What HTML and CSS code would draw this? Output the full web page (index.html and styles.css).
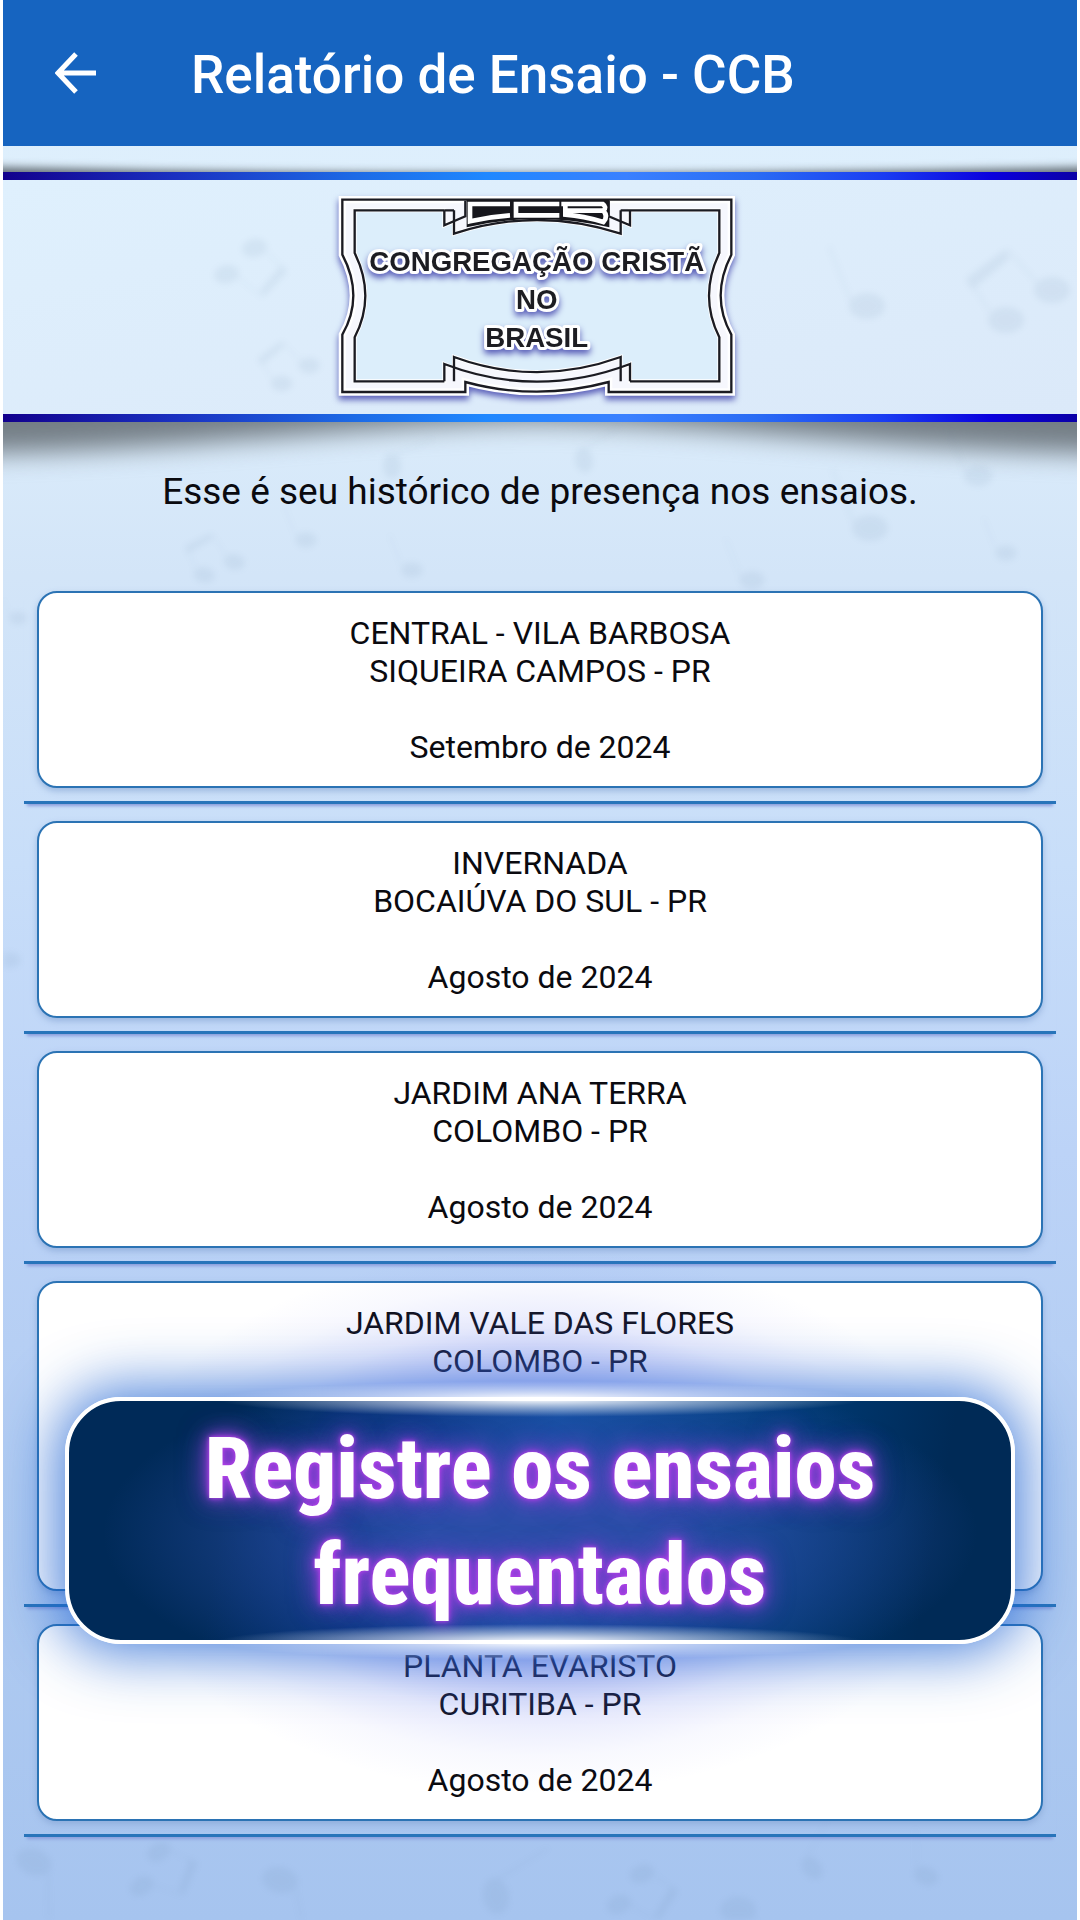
FILE: index.html
```html
<!DOCTYPE html>
<html lang="pt-BR">
<head>
<meta charset="utf-8">
<meta name="viewport" content="width=device-width, initial-scale=1">
<title>Relatório de Ensaio - CCB</title>
<link rel="stylesheet" href="styles.css">
</head>
<body>
<div class="screen">
  <svg class="notes" viewBox="0 0 1080 1920" preserveAspectRatio="xMidYMid slice" aria-hidden="true">
    <defs>
      <g id="single"><ellipse rx="18" ry="13"/><path d="M-16 -4L-38 -60" class="stem"/></g>
      <g id="pair"><ellipse cx="-24" cy="16" rx="18" ry="13"/><ellipse cx="22" cy="-14" rx="18" ry="13"/><path d="M-40 8L-62 -26L-22 -54L8 -20" class="stem"/><path d="M-64 -24L-26 -54L-20 -46L-58 -14Z"/></g>
    </defs>
    <use href="#single" x="867" y="306"/>
    <use href="#pair" x="1030" y="304"/>
    <use href="#pair" transform="translate(240 262) rotate(170) scale(.7)"/>
    <use href="#pair" transform="translate(296 374) scale(.6)"/>
    <use href="#single" x="870" y="528"/>
    <use href="#single" transform="translate(306 540) scale(.6)"/>
    <use href="#pair" transform="translate(220 568) rotate(10) scale(.6)"/>
    <use href="#single" transform="translate(978 476) scale(.8)"/>
    <use href="#single" transform="translate(1006 553) scale(.6)"/>
    <use href="#single" transform="translate(412 570) scale(.6)"/>
    <use href="#single" transform="translate(752 580) scale(.7)"/>
    <use href="#single" transform="translate(392 466) rotate(90) scale(.7)"/>
    <use href="#single" transform="translate(584 460) rotate(80) scale(.7)"/>
    <use href="#single" transform="translate(18 618) scale(.5)"/>
    <use href="#single" transform="translate(10 960) scale(.6)"/>
    <use href="#single" transform="translate(34 1862) rotate(200)"/>
    <use href="#pair" transform="translate(150 1870) rotate(150) scale(.7)"/>
    <use href="#single" transform="translate(280 1880) rotate(190)"/>
    <use href="#single" transform="translate(496 1896) rotate(80)"/>
    <use href="#pair" transform="translate(630 1890) rotate(160) scale(.7)"/>
    <use href="#single" transform="translate(738 1910) rotate(180)"/>
    <use href="#single" transform="translate(812 1868) rotate(50) scale(.7)"/>
    <use href="#single" transform="translate(926 1876) rotate(20) scale(.7)"/>
  </svg>

  <header class="bar">
    <button class="back" type="button" aria-label="Voltar">
      <svg viewBox="0 0 42 42" aria-hidden="true"><path d="M41 21H4M21 2L3 21L21 40"/></svg>
    </button>
    <h1 class="title">Relatório de Ensaio - CCB</h1>
  </header>

  <section class="brand">
    <svg class="shade" viewBox="0 0 1080 320" preserveAspectRatio="none" aria-hidden="true">
      <path class="shade-top" d="M-40 60V20Q540 34 1120 20V60Z"/>
      <path class="shade-bottom" d="M-40 230H1120V308C880 304 720 278 540 276C360 278 200 304 -40 308Z"/>
    </svg>
    <div class="band">
      <svg class="logo" viewBox="15 -4 1290 702" role="img" aria-label="Congregação Cristã no Brasil">
        <g class="frame">
          <path d="M67 55H1234V220Q1170 345 1234 460V632H866V602Q650 660 436 602V632H67V460Q133 345 67 220Z"/>
          <path class="hole" d="M104 87H373V132L402 120V157Q650 75 902 157V120L930 132V87H1198V215Q1136 345 1198 468V600H930V548L902 560V527Q650 618 402 527V560L373 548V600H104V468Q168 345 104 215Z"/>
        </g>
        <g class="rules">
          <path d="M67 55H1234V220Q1170 345 1234 460V632H866V602Q650 660 436 602V632H67V460Q133 345 67 220Z"/>
          <path d="M373 87H104V215Q168 345 104 468V600H373M930 87H1198V215Q1136 345 1198 468V600H930"/>
        </g>
        <g class="ribbon">
          <path d="M402 87V157Q650 75 902 157V87"/>
          <path d="M373 87V132L436 105V58M930 87V132L866 105V58M373 87H402M902 87H930"/>
          <path d="M402 600V527Q650 618 902 527V600"/>
          <path d="M373 600V548Q650 654 930 548V600"/>
        </g>
        <path class="plate" d="M440 56H868V138Q650 88 440 138Z"/>
        <g class="initials">
          <path d="M570 68H450V120Q510 106 570 102"/>
          <path d="M718 68H588V102H718"/>
          <path d="M724 68H848Q862 78 850 88H742H850Q866 106 850 122Q790 104 736 100V68"/>
        </g>
        <g class="name">
          <text x="650" y="269">CONGREGAÇÃO CRISTÃ</text>
          <text x="650" y="383">NO</text>
          <text x="650" y="497">BRASIL</text>
        </g>
      </svg>
    </div>
  </section>

  <main class="history">
    <p class="intro">Esse é seu histórico de presença nos ensaios.</p>
    <ul class="list">
      <li class="item"><article class="card"><p>CENTRAL - VILA BARBOSA<br>SIQUEIRA CAMPOS - PR</p><p>Setembro de 2024</p></article></li>
      <li class="item"><article class="card"><p>INVERNADA<br>BOCAIÚVA DO SUL - PR</p><p>Agosto de 2024</p></article></li>
      <li class="item"><article class="card"><p>JARDIM ANA TERRA<br>COLOMBO - PR</p><p>Agosto de 2024</p></article></li>
      <li class="item"><article class="card card-tall"><p>JARDIM VALE DAS FLORES<br>COLOMBO - PR</p></article></li>
      <li class="item"><article class="card"><p>PLANTA EVARISTO<br>CURITIBA - PR</p><p>Agosto de 2024</p></article></li>
    </ul>
  </main>

  <aside class="banner">
    <div class="plaque">
      <p class="slogan">Registre os ensaios<br>frequentados</p>
    </div>
  </aside>
</div>
</body>
</html>
```
FILE: styles.css
```css
* { box-sizing: border-box; margin: 0; padding: 0; }

body {
  background: #fff;
  color: #0a0a0f;
  font-family: Roboto, "Liberation Sans", sans-serif;
}

.screen {
  position: relative;
  isolation: isolate;
  display: flex;
  flex-direction: column;
  min-height: 100vh;
  margin: 0 3px;
  overflow: hidden;
  background: linear-gradient(#dff0fd 0%, #dcedfb 20%, #d3e5f8 30%, #c8def9 45%, #bcd3f7 60%, #b0cbf1 80%, #a6c4ef 100%);
}

.notes {
  position: absolute;
  inset: 0;
  z-index: 1;
  width: 100%;
  height: 100%;
  fill: #5f7fa0;
  opacity: .09;
  filter: blur(3px);
}
.stem { fill: none; stroke: #5f7fa0; stroke-width: 4; stroke-opacity: .5; }

.bar {
  display: flex;
  align-items: center;
  gap: 94px;
  height: 146px;
  padding: 0 52px;
  background: #1664c0;
  color: #fff;
}
.back { display: flex; border: 0; background: none; }
.back svg { width: 42px; height: 42px; fill: none; stroke: #fff; stroke-width: 5; }
.title { padding-top: 4px; font-size: 53px; font-weight: 500; line-height: 64px; }

.brand { position: relative; padding-top: 26px; }
.shade {
  position: absolute;
  inset: 0 0 auto;
  width: 100%;
  height: 320px;
  overflow: visible;
}
.shade-top { fill: #667078; filter: blur(4px); }
.shade-bottom { fill: #747e86; filter: blur(13px); }
.band {
  position: relative;
  display: flex;
  justify-content: center;
  border-style: solid;
  border-width: 8px 0;
  border-image: linear-gradient(90deg, #12008c, #1a30c0 16%, #1d6be6 33%, #2088ff 45%, #3a80ff 58%, #2a6cf4 70%, #1a3cf2 82%, #0a00dd 92%, #0b00a6) 1;
  background: linear-gradient(170deg, #dff0fd, #dbe9f9);
}
.logo { width: 430px; height: 234px; overflow: visible; }
.frame, .name { filter: drop-shadow(0 12px 10px #5a5fb8); }
.frame { fill: #f6f7fd; stroke: #fff; stroke-width: 22; }
.frame .hole { fill: #dceefb; stroke-width: 12; }
.rules, .ribbon { fill: none; stroke: #1b1b22; stroke-width: 7; }
.plate { fill: #17171c; }
.initials { fill: none; stroke: #fff; stroke-width: 14; }
.name {
  fill: #1d1d22;
  stroke: #fff;
  stroke-width: 18;
  paint-order: stroke;
  stroke-linejoin: round;
  font: bold 83px "Liberation Sans", sans-serif;
  text-anchor: middle;
}

.history { padding: 45px 21px 60px; }
.intro {
  position: relative;
  z-index: 2;
  margin-bottom: 76px;
  font-size: 37px;
  line-height: 50px;
  margin-bottom: 74px;
  text-align: center;
}
.list { position: relative; z-index: 2; list-style: none; display: grid; gap: 17px; }
.item {
  padding: 0 13px 13px;
  border-bottom: 3px solid #2874ba;
  box-shadow: 0 5px 3px -3px #8a9cdc;
}
.card {
  display: flex;
  flex-direction: column;
  gap: 38px;
  min-height: 197px;
  padding: 21px 20px 18px;
  border: 2px solid #2b73b4;
  border-radius: 20px;
  background: #fff;
  box-shadow: 0 3px 6px #7f9fd0a0;
  font-size: 32px;
  line-height: 38px;
  text-align: center;
}
.card-tall { min-height: 310px; }

.banner {
  position: absolute;
  inset: auto 62px 276px;
  z-index: 3;
}
.banner::before {
  content: "";
  position: absolute;
  inset: -150px 40px;
  background: radial-gradient(closest-side, #5264ea90 35%, #5264ea60 52%, #6474f024 72%, #6a78f00c 86%, #6a78f000);
}
.banner::after {
  content: "";
  position: absolute;
  inset: -20px 0;
  background:
    radial-gradient(ellipse 34% 18px at 50% 22px, #fff, #fff8 45%, #fff0) top / 100% 44px no-repeat,
    radial-gradient(ellipse 34% 18px at 50% 22px, #fff, #fff8 45%, #fff0) bottom / 100% 44px no-repeat;
}
.plaque {
  position: relative;
  display: flex;
  align-items: center;
  justify-content: center;
  height: 247px;
  border: 4px solid #fff;
  border-radius: 56px;
  background:
    radial-gradient(ellipse 46% 70% at 50% 55%, #2c4fa9 25%, #2c4fa900),
    linear-gradient(100deg, #002a58 18%, #003078 36%, #0a50a0 50%, #003c78 72%, #002a56 90%);
  background-origin: border-box;
  box-shadow: 0 0 60px 8px #1a60d0d0;
}
.slogan {
  padding-top: 2px;
  color: #fff;
  font-family: "Roboto Condensed", Roboto, sans-serif;
  font-size: 85px;
  font-weight: 800;
  line-height: 106px;
  text-align: center;
  text-shadow: 0 0 4px #c040f0, 0 0 12px #a040e0, 0 0 24px #8a3fd8, 0 0 30px #8a3fd880;
}
```
